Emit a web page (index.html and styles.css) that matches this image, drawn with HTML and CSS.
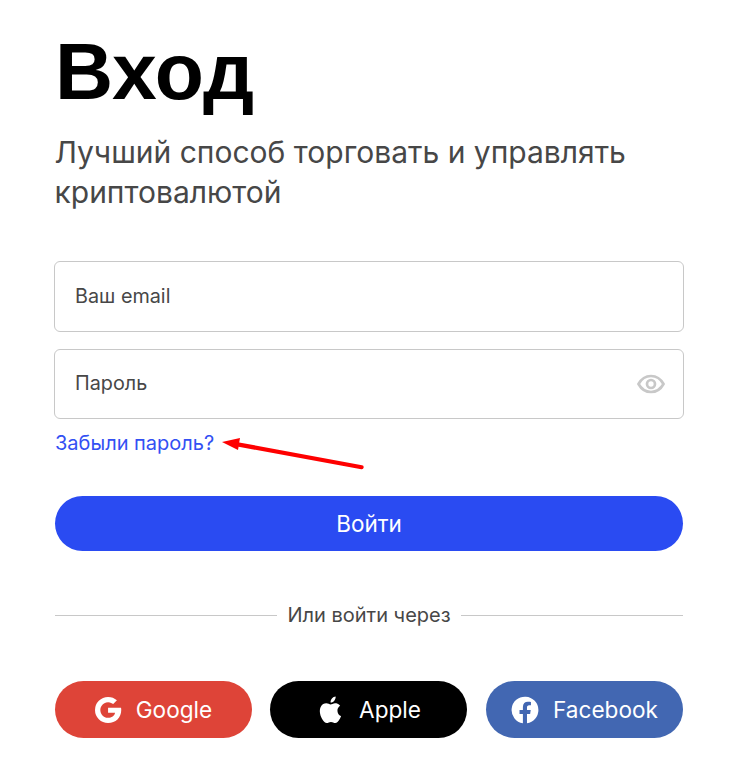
FILE: index.html
```html
<!DOCTYPE html>
<html lang="ru">
<head>
<meta charset="utf-8">
<title>Вход</title>
<link rel="stylesheet" href="styles.css">
</head>
<body>
<main class="page">
  <h1 class="title">Вход</h1>
  <p class="subtitle">Лучший способ торговать и управлять криптовалютой</p>
  <form class="form">
    <div class="field"><span class="placeholder">Ваш email</span></div>
    <div class="field">
      <span class="placeholder">Пароль</span>
      <svg class="eye" viewBox="0 0 28 20" width="28" height="20" fill="none" stroke="#c8c8c8" stroke-width="2.7">
        <path d="M1.500 10C4.500 4.600 9 2 14 2s9.500 2.600 12.500 8C23.500 15.400 19 18 14 18S4.500 15.400 1.500 10Z"/>
        <circle cx="14" cy="10" r="4"/>
      </svg>
    </div>
    <a class="forgot" href="#">Забыли пароль?</a>
    <button class="submit" type="button">Войти</button>
    <div class="divider"><span>Или войти через</span></div>
    <div class="socials">
      <a class="social google" href="#">
        <svg viewBox="1 0 24 24" width="28" height="28" fill="#fff"><path d="M12.200 10v4.300h6c-.6 2.700-2.900 4.400-6 4.400a6.700 6.700 0 1 1 4.400-11.800l3.200-3.200A11.200 11.200 0 0 0 12.200.8a11.200 11.200 0 1 0 0 22.400c6.500 0 11.300-4.600 11.300-11.200 0-.7-.1-1.400-.2-2H12.200Z"/></svg>
        Google
      </a>
      <a class="social apple" href="#">
        <svg viewBox="2 0 24 24" width="33" height="33" fill="#fff"><path d="M17.600 12.700c0-2.300 1.900-3.400 2-3.500-1.100-1.600-2.800-1.800-3.400-1.800-1.400-.2-2.800.9-3.600.9-.7 0-1.900-.8-3.100-.8-1.600 0-3.100.9-3.900 2.300-1.700 2.900-.4 7.200 1.200 9.600.8 1.200 1.800 2.400 3 2.400s1.700-.8 3.100-.8 1.900.8 3.100.8c1.300 0 2.100-1.200 2.900-2.300.9-1.300 1.300-2.600 1.300-2.700-.1 0-2.600-1-2.600-4.100ZM15.300 5.600c.6-.8 1.100-1.900 1-3-.9 0-2.100.6-2.700 1.400-.6.700-1.100 1.800-1 2.900 1.100.1 2.100-.5 2.700-1.300Z"/></svg>
        Apple
      </a>
      <a class="social facebook" href="#">
        <svg viewBox="0 0 24 24" width="28" height="28" fill="#fff"><path d="M23.500 12a11.500 11.500 0 1 0-13.300 11.400v-8H7.300V12h2.900V9.500c0-2.900 1.700-4.500 4.300-4.500 1.300 0 2.600.2 2.600.2V8h-1.500c-1.400 0-1.900.9-1.900 1.800V12h3.200l-.5 3.400h-2.700v8A11.500 11.500 0 0 0 23.500 12Z"/></svg>
        Facebook
      </a>
    </div>
  </form>
</main>
<svg class="arrow" viewBox="0 0 150 40" width="150" height="40" fill="#fe0000">
  <path d="M0 6 18 2 17.200 6.500 140 29.200A2 2 0 0 1 139.300 33.200L16.600 10.800 16 14Z"/>
</svg>
</body>
</html>
```

FILE: styles.css
```css
* { box-sizing: border-box; }
html, body { margin: 0; padding: 0; background: #fff; }
body { font-family: Inter, "Noto Sans", sans-serif; color: #474747; height: 772px; overflow: hidden; position: relative; }
.page { width: 628px; margin-left: 55px; padding-top: 25px; }
.title { margin: 0; font-family: "Liberation Sans", Arial, sans-serif; font-weight: 700; font-size: 80.500px; line-height: 92px; color: #000; }
.subtitle { margin: 15px -1px 0 -0.500px; font-size: 30px; line-height: 40px; color: #474747; }
.form { margin-top: 49px; display: flex; flex-direction: column; }
.field { margin: 0 -1px 17px; height: 71px; border: 1px solid #c8c8c8; border-radius: 6px; display: flex; align-items: center; justify-content: space-between; padding: 0 18px 0 20px; font-size: 19.800px; }
.field + .field { height: 70px; margin-bottom: 0; }
.placeholder { color: #474747; margin-top: -2px; }
.eye { display: block; }
.forgot { margin-top: 12px; font-size: 20px; line-height: 24px; color: #3350f3; text-decoration: none; }
.submit { margin-top: 41px; height: 55px; border: 0; border-radius: 28px; background: #2a4bf2; color: #fff; font: 400 22.500px Inter, sans-serif; }
.divider { margin-top: 52px; display: flex; align-items: center; gap: 10px; font-size: 20px; line-height: 24px; color: #474747; }
.divider::before, .divider::after { content: ""; flex: 1; height: 1px; background: #c8c8c8; }
.socials { margin-top: 54px; display: flex; gap: 18px; }
.social { flex: 0 0 197px; height: 57px; border-radius: 29px; display: flex; align-items: center; justify-content: center; gap: 13px; color: #fff; font-size: 22.600px; text-decoration: none; }
.google { background: #de4438; }
.apple { background: #000; gap: 10px; }
.facebook { background: #4267b2; margin-left: 1px; gap: 14px; }
.arrow { position: absolute; left: 222px; top: 436px; }
```
